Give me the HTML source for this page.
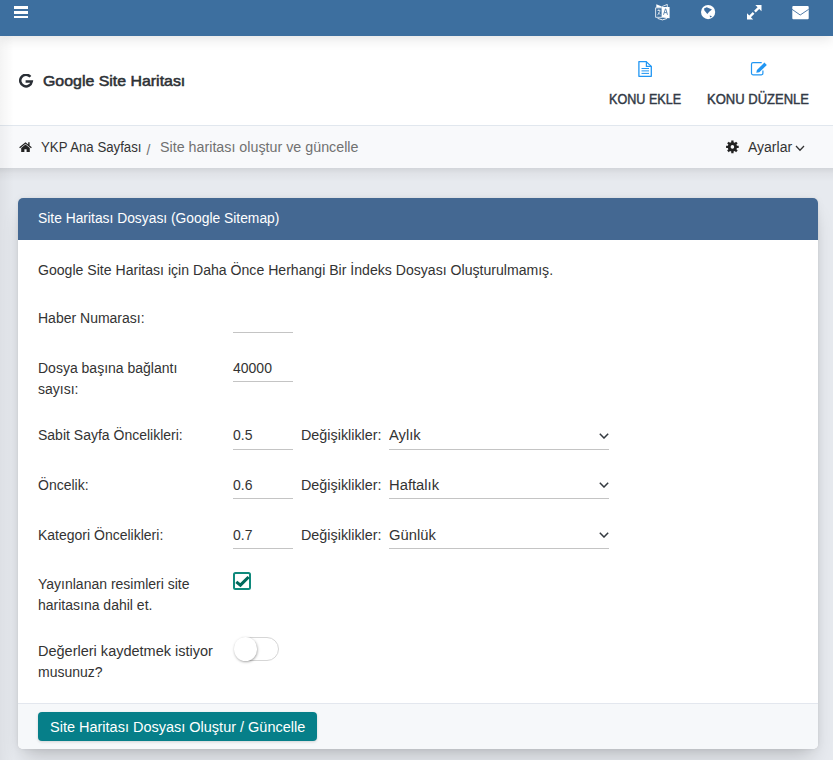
<!DOCTYPE html>
<html><head><meta charset="utf-8">
<style>
*{box-sizing:border-box;margin:0;padding:0}
html,body{width:833px;height:760px;overflow:hidden}
body{font-family:"Liberation Sans",sans-serif;font-size:14px;color:#333;background:#e7eaef;position:relative}
.abs{position:absolute}
svg{position:absolute;display:block}
#top{left:0;top:0;width:833px;height:36px;background:#3d6f9f;box-shadow:0 2px 14px rgba(0,0,0,.12);z-index:2}
#hdr{left:0;top:36px;width:833px;height:90px;background:#fff;border-bottom:1px solid #e1e7ee}
#bc{left:0;top:126px;width:833px;height:42px;background:#f8f9fb}
#bcs{left:0;top:168px;width:833px;height:14px;background:linear-gradient(rgba(0,0,0,.09),rgba(0,0,0,.03) 40%,rgba(0,0,0,0))}
.card{left:18px;top:198px;width:800px;height:551px;background:#fff;border-radius:5px;box-shadow:0 0 3px rgba(0,0,0,.06),0 0 10px rgba(0,0,0,.04),0 12px 20px -6px rgba(0,0,0,.2)}
.ch{left:0;top:0;width:800px;height:42px;background:#446892;border-radius:5px 5px 0 0;color:#fff}
.cf{left:0;top:505px;width:800px;height:46px;background:#f6f8fa;border-top:1px solid #e3e7ee;border-radius:0 0 5px 5px}
.t{position:absolute;white-space:nowrap;line-height:21px}
.ul{position:absolute;height:1px;background:#c4c4c4}
.sq{transform-origin:0 0}
.btn{left:20px;top:8px;width:279px;height:29px;background:#067f89;border-radius:4px;box-shadow:0 1px 3px rgba(0,0,0,.15)}
.chev{width:10px;height:6px}
</style></head><body>
<div id="top" class="abs">
  <div class="abs" style="left:14px;top:6.2px;width:14px;height:2.6px;background:#fff"></div>
  <div class="abs" style="left:14px;top:11px;width:14px;height:2.6px;background:#fff"></div>
  <div class="abs" style="left:14px;top:15.7px;width:14px;height:2.6px;background:#fff"></div>
  <!-- translate icon -->
  <svg style="left:655px;top:4px" width="15" height="17" viewBox="0 0 15 17">
    <path d="M1.3 0.2 L6.8 2.6 L6.8 3.4 L1.3 3.4 Z" fill="#fff"/>
    <path d="M7 2.6 L12.3 0.4 L12.3 3.2" fill="none" stroke="#fff" stroke-width="0.8"/>
    <path d="M0.6 3.8 L7 3.8 L7 13.3 L0.6 13.3 Z" fill="none" stroke="#fff" stroke-width="0.8"/>
    <path d="M7 3.1 L14.6 3.1 L14.6 14.2 L7 13.6 Z" fill="#fff"/>
    <path d="M2.4 6.4 H5.3 M3.8 5.4 V6.9 M5.1 6.9 L2.6 11.2 M3.2 8.7 L5.4 10.6" stroke="#fff" stroke-width="0.7" fill="none"/>
    <path d="M8.5 10.8 L10.4 4.9 L10.8 4.9 L12.5 10.8 M9.3 8.6 H11.7" stroke="#3d6f9f" stroke-width="0.8" fill="none"/>
    <path d="M2.6 14.4 Q7.5 17.4 12.2 14.4" stroke="#fff" stroke-width="0.9" fill="none"/>
  </svg>
  <!-- globe -->
  <svg style="left:701px;top:5px" width="15" height="15" viewBox="0 0 15 15">
    <circle cx="7.1" cy="7.1" r="7.1" fill="#fff"/>
    <path d="M3 3.6 L5.7 2.3 L11 4.4 L8.2 6.8 L6.3 8.9 L3.4 5.6 Z" fill="#3d6d9f"/>
    <path d="M8.6 10.4 L11.2 11.2 L9.1 12.4 Z" fill="#3d6d9f"/>
  </svg>
  <!-- expand -->
  <svg style="left:746px;top:4px" width="16" height="16" viewBox="0 0 16 16">
    <path d="M9.3 1 L15.5 1 L15.5 7.2 L13.2 4.9 L9.75 8.45 L8.05 6.75 L11.6 3.3 Z" fill="#fff"/>
    <path d="M1 9.3 L1 15.5 L7.2 15.5 L4.9 13.2 L8.45 9.75 L6.75 8.05 L3.3 11.6 Z" fill="#fff"/>
  </svg>
  <!-- envelope -->
  <svg style="left:791.5px;top:6px" width="17" height="14" viewBox="0 0 17 14">
    <rect x="0.3" y="0.1" width="16.4" height="13.2" rx="1" fill="#fff"/>
    <path d="M0 3.3 L8.2 9 L16.7 3.3" fill="none" stroke="#3d6d9f" stroke-width="0.9"/>
  </svg>
</div>
<div id="hdr" class="abs">
  <!-- google G -->
  <svg style="left:19px;top:38px" width="15" height="15" viewBox="0 0 15 15">
    <path d="M11.4 2.8 A5.8 5.8 0 1 0 12.75 7.6 L6.6 7.6" fill="none" stroke="#2a2f36" stroke-width="2.5"/>
  </svg>
  <div class="t sq" style="left:43px;top:34px;font-size:15px;color:#2d3136;-webkit-text-stroke:.55px #2d3136;transform:scaleX(1.06)">Google Site Haritası</div>
  <!-- file icon -->
  <svg style="left:637px;top:24px" width="17" height="18" viewBox="0 0 17 18">
    <path d="M1.9 1.6 L9.2 1.6 L14.3 6.4 L14.3 16.3 L1.9 16.3 Z" fill="none" stroke="#2196f3" stroke-width="1.3" stroke-linejoin="round"/>
    <path d="M9.4 1.6 L9.4 6.3 L14.3 6.3" fill="none" stroke="#2196f3" stroke-width="1.2"/>
    <path d="M4.5 8.5 H12 M4.5 10.9 H12 M4.5 13.4 H12" stroke="#2196f3" stroke-width="1"/>
  </svg>
  <!-- edit icon -->
  <svg style="left:750px;top:25px" width="18" height="15" viewBox="0 0 18 15">
    <path d="M11.7 1.7 L3 1.7 Q1.5 1.7 1.5 3.2 L1.5 12.3 Q1.5 13.8 3 13.8 L11.4 13.8 Q12.9 13.8 12.9 12.3 L12.9 9.4" fill="none" stroke="#2196f3" stroke-width="1.2"/>
    <path d="M6.3 11.8 L6.9 9 L14.4 1.5 L16.8 3.9 L9.3 11.3 Z" fill="#2196f3"/>
  </svg>
  <div class="t sq" style="left:609px;top:53px;font-size:14px;color:#323a46;-webkit-text-stroke:.45px #323a46;transform:scaleX(.9)">KONU EKLE</div>
  <div class="t sq" style="left:707px;top:53px;font-size:14px;color:#323a46;-webkit-text-stroke:.45px #323a46;transform:scaleX(.93)">KONU DÜZENLE</div>
</div>
<div id="bc" class="abs">
  <!-- home -->
  <svg style="left:18.5px;top:15.8px" width="13" height="10.4" viewBox="0 0 13 11" preserveAspectRatio="none">
    <path d="M6.5 0.3 L0.2 5.6 L1 6.5 L6.5 1.9 L12 6.5 L12.8 5.6 L10.6 3.7 L10.6 0.3 L9.2 0.3 L9.2 2.6 Z" fill="#222"/>
    <path d="M2.2 6.3 L6.5 2.7 L10.8 6.3 L10.8 10.8 L7.6 10.8 L7.6 7.8 L5.4 7.8 L5.4 10.8 L2.2 10.8 Z" fill="#222"/>
  </svg>
  <div class="t sq" style="left:41px;top:11px;color:#333;transform:scaleX(.945)">YKP Ana Sayfası</div>
  <div class="t sq" style="left:146.5px;top:12px;color:#717171;transform:scaleY(1.1)">/</div>
  <div class="t sq" style="left:160px;top:11px;color:#717171;transform:scaleX(1.02)">Site haritası oluştur ve güncelle</div>
  <!-- gear -->
  <svg style="left:725px;top:14px" width="15" height="14" viewBox="0 0 15 14">
    <path d="M11.96 5.75 L13.70 5.75 L13.70 8.05 L11.96 8.05 L11.44 9.31 L12.67 10.54 L11.04 12.17 L9.81 10.94 L8.55 11.46 L8.55 13.20 L6.25 13.20 L6.25 11.46 L4.99 10.94 L3.76 12.17 L2.13 10.54 L3.36 9.31 L2.84 8.05 L1.10 8.05 L1.10 5.75 L2.84 5.75 L3.36 4.49 L2.13 3.26 L3.76 1.63 L4.99 2.86 L6.25 2.34 L6.25 0.60 L8.55 0.60 L8.55 2.34 L9.81 2.86 L11.04 1.63 L12.67 3.26 L11.44 4.49 Z M9.20 6.90 A1.8 1.8 0 1 0 5.60 6.90 A1.8 1.8 0 1 0 9.20 6.90 Z" fill="#222" fill-rule="evenodd"/>
  </svg>
  <div class="t" style="left:748px;top:11px;color:#333">Ayarlar</div>
  <svg style="left:795px;top:19px" width="10" height="7" viewBox="0 0 10 7"><path d="M1 1 L5 5.3 L9 1" fill="none" stroke="#333" stroke-width="1.25"/></svg>
</div>
<div id="bcs" class="abs"></div>
<div class="card abs">
  <div class="ch abs"><div class="t sq" style="left:20px;top:10px;transform:scaleX(.988)">Site Haritası Dosyası (Google Sitemap)</div></div>
  <div class="t sq" style="left:20px;top:62px;transform:scaleX(1.006)">Google Site Haritası için Daha Önce Herhangi Bir İndeks Dosyası Oluşturulmamış.</div>

  <div class="t" style="left:20px;top:110px">Haber Numarası:</div>
  <div class="ul" style="left:215px;top:134px;width:60px"></div>

  <div class="t" style="left:20px;top:160px">Dosya başına bağlantı<br>sayısı:</div>
  <div class="t" style="left:215px;top:160px">40000</div>
  <div class="ul" style="left:215px;top:183px;width:60px"></div>

  <div class="t" style="left:20px;top:227px">Sabit Sayfa Öncelikleri:</div>
  <div class="t" style="left:215px;top:227px">0.5</div>
  <div class="ul" style="left:215px;top:251px;width:60px"></div>
  <div class="t sq" style="transform:scaleX(1.025);left:283px;top:227px">Değişiklikler:</div>
  <div class="t sq" style="transform:scaleX(1.055);left:371px;top:227px">Aylık</div>
  <div class="ul" style="left:371px;top:251px;width:220px"></div>
  <svg class="chev" style="left:581px;top:235px" viewBox="0 0 10 6"><path d="M0.8 0.8 L5 5 L9.2 0.8" fill="none" stroke="#343a40" stroke-width="1.5"/></svg>

  <div class="t" style="left:20px;top:277px">Öncelik:</div>
  <div class="t" style="left:215px;top:277px">0.6</div>
  <div class="ul" style="left:215px;top:300px;width:60px"></div>
  <div class="t sq" style="transform:scaleX(1.025);left:283px;top:277px">Değişiklikler:</div>
  <div class="t sq" style="transform:scaleX(1.055);left:371px;top:277px">Haftalık</div>
  <div class="ul" style="left:371px;top:300px;width:220px"></div>
  <svg class="chev" style="left:581px;top:284px" viewBox="0 0 10 6"><path d="M0.8 0.8 L5 5 L9.2 0.8" fill="none" stroke="#343a40" stroke-width="1.5"/></svg>

  <div class="t" style="left:20px;top:327px">Kategori Öncelikleri:</div>
  <div class="t" style="left:215px;top:327px">0.7</div>
  <div class="ul" style="left:215px;top:350px;width:60px"></div>
  <div class="t sq" style="transform:scaleX(1.025);left:283px;top:327px">Değişiklikler:</div>
  <div class="t sq" style="transform:scaleX(1.055);left:371px;top:327px">Günlük</div>
  <div class="ul" style="left:371px;top:350px;width:220px"></div>
  <svg class="chev" style="left:581px;top:334px" viewBox="0 0 10 6"><path d="M0.8 0.8 L5 5 L9.2 0.8" fill="none" stroke="#343a40" stroke-width="1.5"/></svg>

  <div class="t" style="left:20px;top:376px">Yayınlanan resimleri site<br>haritasına dahil et.</div>
  <div class="abs" style="left:215px;top:374px;width:18px;height:18px;border:2px solid #0f897c;border-radius:2.5px"></div>
  <svg style="left:216px;top:374px" width="18" height="18" viewBox="0 0 18 18"><path d="M2.3 9.9 L6.4 13.2 L14.6 5" fill="none" stroke="#00695c" stroke-width="3.1" stroke-linejoin="miter"/></svg>

  <div class="t sq" style="left:20px;top:443px;transform:scaleX(1.036)">Değerleri kaydetmek istiyor</div>
  <div class="t" style="left:20px;top:464px">musunuz?</div>
  <div class="abs" style="left:215.5px;top:439px;width:45.5px;height:23.5px;border:1px solid #d6d6d6;border-radius:12px;background:#fff"></div>
  <div class="abs" style="left:215.5px;top:439px;width:23.5px;height:23.5px;border-radius:50%;background:#fff;box-shadow:0.5px 1px 2.5px rgba(0,0,0,.35)"></div>

  <div class="cf abs">
    <div class="btn abs"><div class="t sq" style="left:12px;top:5px;color:#fff;transform:scaleX(1.035)">Site Haritası Dosyası Oluştur / Güncelle</div></div>
  </div>
</div>
<div class="abs" style="left:0;top:36px;width:14px;height:724px;background:linear-gradient(to right,rgba(0,0,0,.045),rgba(0,0,0,0));z-index:3"></div>
</body></html>
